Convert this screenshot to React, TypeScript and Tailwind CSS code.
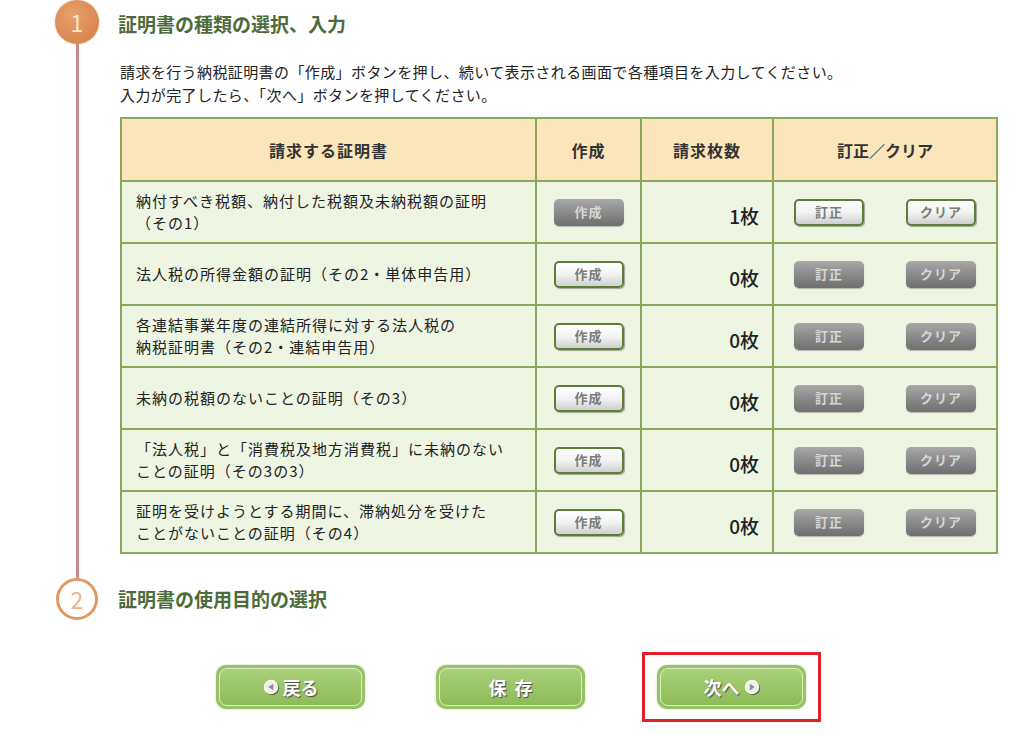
import React from "react";

const font = { fontFamily: '"Noto Sans CJK JP", "Noto Sans", sans-serif' };

function GrayBtn({ label }: { label: string }) {
  return (
    <div className="w-[70px] h-[27px] rounded-[5px] bg-gradient-to-b from-[#a9a9a9] via-[#8a8a8a] to-[#6f6f6f] flex items-center justify-center text-[13px] font-bold text-[#d6d6d6] shadow-[0_1px_1px_rgba(0,0,0,0.25)] tracking-[1px]">
      {label}
    </div>
  );
}

function WhiteBtn({ label }: { label: string }) {
  return (
    <div className="w-[70px] h-[27px] rounded-[5px] border-2 border-[#5f7d3a] bg-gradient-to-b from-[#ffffff] via-[#f3f3f3] to-[#cfcfcf] flex items-center justify-center text-[13px] font-bold text-[#7a7d76] shadow-[1px_1px_1px_rgba(60,80,30,0.45)] tracking-[1px]">
      {label}
    </div>
  );
}

function BigBtn({ children }: { children: React.ReactNode }) {
  return (
    <div className="w-[149px] h-[44px] rounded-[10px] bg-[#97c266] p-[3px] shadow-[0_0_2px_rgba(120,160,80,0.5)]">
      <div className="w-full h-full rounded-[8px] border border-[#dcefbf] bg-gradient-to-b from-[#a9d07a] to-[#8dbb58] flex items-center justify-center gap-[4px] text-white text-[18px] font-bold [text-shadow:1px_1px_1px_#4a4a4a]">
        {children}
      </div>
    </div>
  );
}

function CircleArrow({ dir }: { dir: "left" | "right" }) {
  return (
    <svg width="16" height="16" viewBox="0 0 16 16" className="drop-shadow-[1px_1px_0.5px_rgba(60,60,60,0.7)]">
      <circle cx="8" cy="8" r="6.6" fill="#eef2ea" stroke="#ffffff" strokeWidth="1.2" />
      {dir === "left" ? (
        <polygon points="10.3,4.8 10.3,11.2 5.3,8" fill="#8a8f85" />
      ) : (
        <polygon points="5.9,4.8 5.9,11.2 10.9,8" fill="#8a8f85" />
      )}
    </svg>
  );
}

const rows: { name: React.ReactNode; count: number; filled: boolean }[] = [
  { name: <>納付すべき税額、納付した税額及未納税額の証明<br />（その1）</>, count: 1, filled: true },
  { name: <>法人税の所得金額の証明（その2・単体申告用）</>, count: 0, filled: false },
  { name: <>各連結事業年度の連結所得に対する法人税の<br />納税証明書（その2・連結申告用）</>, count: 0, filled: false },
  { name: <>未納の税額のないことの証明（その3）</>, count: 0, filled: false },
  { name: <>「法人税」と「消費税及地方消費税」に未納のない<br />ことの証明（その3の3）</>, count: 0, filled: false },
  { name: <>証明を受けようとする期間に、滞納処分を受けた<br />ことがないことの証明（その4）</>, count: 0, filled: false },
];

export default function App() {
  return (
    <div style={font} className="w-[1024px] h-[735px] bg-white text-[#333] overflow-hidden">
      <div className="grid grid-cols-[118px_1fr]">
        {/* rail 1 */}
        <div className="flex flex-col items-center w-[44px] ml-[55px]">
          <div className="w-[44px] h-[44px] rounded-full bg-[radial-gradient(circle_at_40%_35%,#e9a06a,#d27c45)] flex items-center justify-center text-[#fbe3cf] text-[24px] leading-none shadow-[0_0_2px_rgba(200,120,70,0.6)]">
            1
          </div>
          <div className="flex-1 w-[3px] bg-[#c98b8d]" />
        </div>
        {/* content 1 */}
        <div className="pb-[24px]">
          <div className="h-[44px] flex items-center pt-[4px] text-[19px] font-bold text-[#4d6b3b]">
            証明書の種類の選択、入力
          </div>
          <div className="mt-[16px] ml-[2px] text-[15px] tracking-[0.4px] leading-[23px] text-[#222]">
            請求を行う納税証明書の「作成」ボタンを押し、続いて表示される画面で各種項目を入力してください。
            <br />
            入力が完了したら、「次へ」ボタンを押してください。
          </div>
          <table className="mt-[11px] ml-[2px] border-collapse border-2 border-[#8aa85a] text-[15px] tracking-[1px]">
            <thead>
              <tr className="h-[63px] bg-[#fbe6bb]">
                <th className="w-[415px] border-2 border-[#8aa85a] font-bold text-[16px] text-[#333]">請求する証明書</th>
                <th className="w-[105px] border-2 border-[#8aa85a] font-bold text-[16px] text-[#333]">作成</th>
                <th className="w-[132px] border-2 border-[#8aa85a] font-bold text-[16px] text-[#333]">請求枚数</th>
                <th className="w-[224px] border-2 border-[#8aa85a] font-bold text-[16px] tracking-[0px] text-[#333]">訂正／クリア</th>
              </tr>
            </thead>
            <tbody>
              {rows.map((r, i) => (
                <tr key={i} className="h-[62px] bg-[#eef5e3]">
                  <td className="border-2 border-[#8aa85a] pl-[14px] leading-[22px] text-[#222]">{r.name}</td>
                  <td className="border-2 border-[#8aa85a]">
                    <div className="flex justify-center">
                      {r.filled ? <GrayBtn label="作成" /> : <WhiteBtn label="作成" />}
                    </div>
                  </td>
                  <td className="border-2 border-[#8aa85a] text-right pr-[13px] pt-[8px] text-[19px] tracking-[0px] font-medium text-[#222]">
                    {r.count}枚
                  </td>
                  <td className="border-2 border-[#8aa85a]">
                    <div className="flex justify-between px-[20px]">
                      {r.filled ? (
                        <>
                          <WhiteBtn label="訂正" />
                          <WhiteBtn label="クリア" />
                        </>
                      ) : (
                        <>
                          <GrayBtn label="訂正" />
                          <GrayBtn label="クリア" />
                        </>
                      )}
                    </div>
                  </td>
                </tr>
              ))}
            </tbody>
          </table>
        </div>
        {/* rail 2 */}
        <div className="ml-[56px] w-[42px] h-[42px] rounded-full border-[3px] border-[#df9a62] bg-white flex items-center justify-center text-[#edb592] text-[23px] leading-none">
          2
        </div>
        <div className="h-[42px] flex items-center text-[19px] font-bold text-[#4d6b3b]">
          証明書の使用目的の選択
        </div>
      </div>

      <div className="mt-[32px] pl-[216px] flex items-center">
        <BigBtn>
          <CircleArrow dir="left" />
          <span>戻る</span>
        </BigBtn>
        <div className="ml-[71px]">
          <BigBtn>
            <span className="tracking-[8px] pl-[8px]">保存</span>
          </BigBtn>
        </div>
        <div className="ml-[57px] border-[3px] border-[#e0202a] px-[12px] py-[10px]">
          <BigBtn>
            <span>次へ</span>
            <CircleArrow dir="right" />
          </BigBtn>
        </div>
      </div>
    </div>
  );
}
